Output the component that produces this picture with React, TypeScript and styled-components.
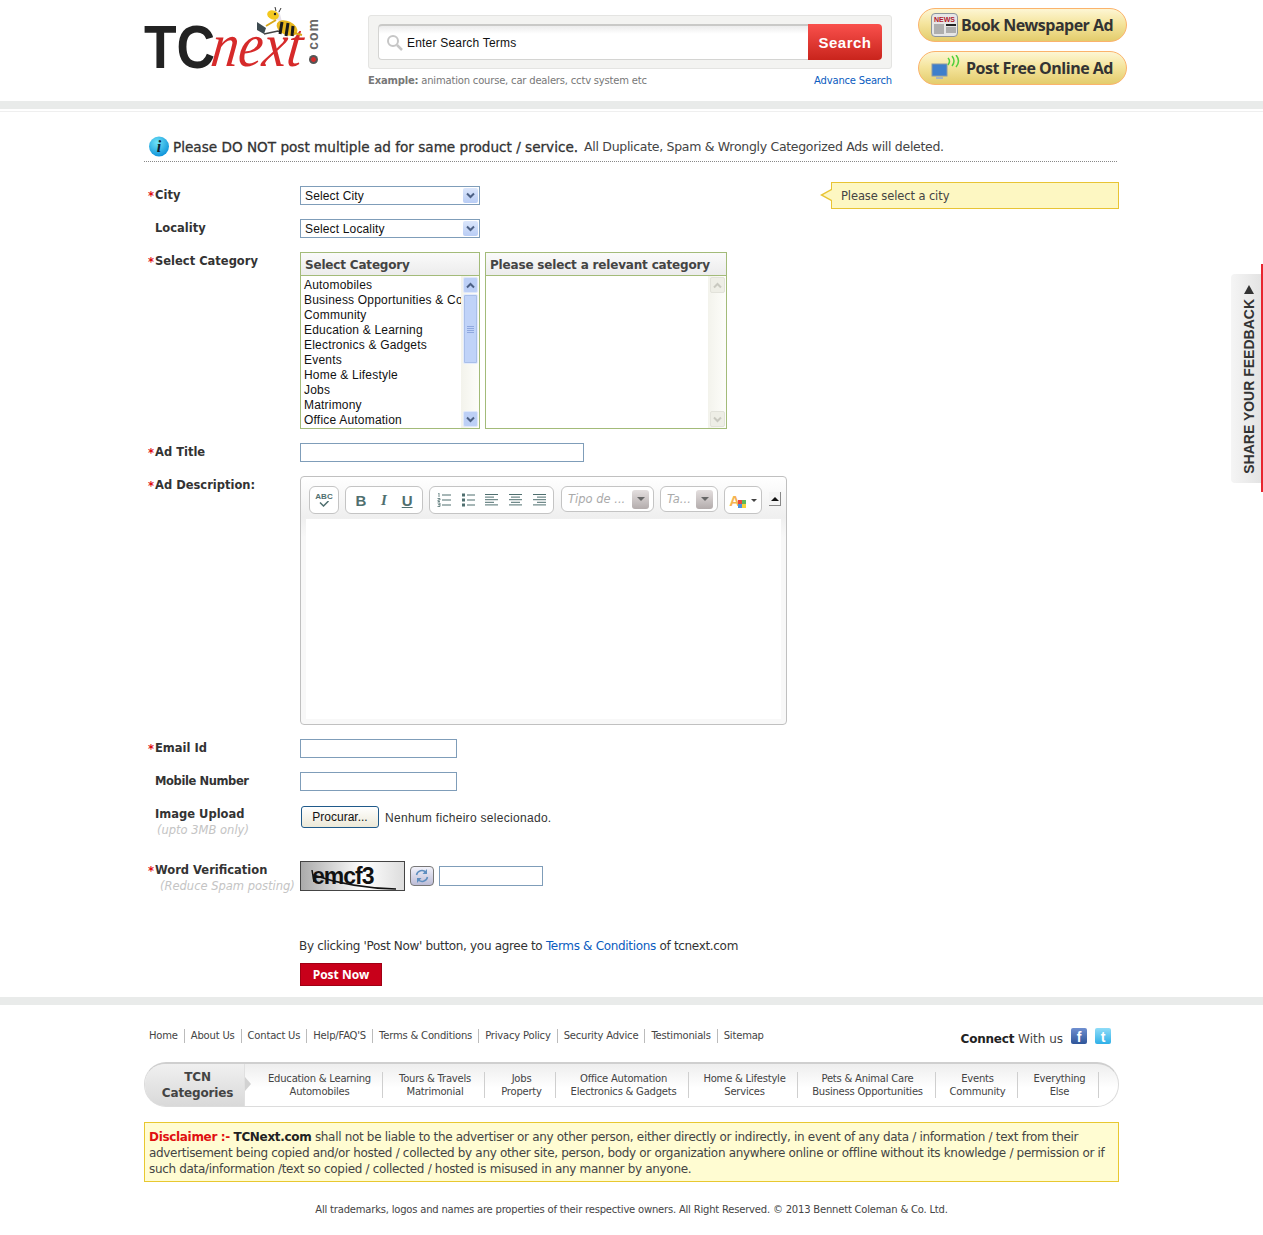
import React from "react";
import styled, { createGlobalStyle } from "styled-components";

const GlobalStyle = createGlobalStyle`
  html, body { margin: 0; padding: 0; background: #fff; }
  body { font-family: "DejaVu Sans", Verdana, sans-serif; font-size: 11px; color: #333; }
  * { box-sizing: border-box; }
`;

const categories = [
  "Automobiles",
  "Business Opportunities & Community",
  "Community",
  "Education & Learning",
  "Electronics & Gadgets",
  "Events",
  "Home & Lifestyle",
  "Jobs",
  "Matrimony",
  "Office Automation",
];

const footerLinks = [
  "Home",
  "About Us",
  "Contact Us",
  "Help/FAQ'S",
  "Terms & Conditions",
  "Privacy Policy",
  "Security Advice",
  "Testimonials",
  "Sitemap",
];

const footerCats = [
  { w: 138, pad: 12, a: "Education & Learning", b: "Automobiles" },
  { w: 102, pad: 3, a: "Tours & Travels", b: "Matrimonial" },
  { w: 71, pad: 3, a: "Jobs", b: "Property" },
  { w: 133, pad: 3, a: "Office Automation", b: "Electronics & Gadgets" },
  { w: 109, pad: 3, a: "Home & Lifestyle", b: "Services" },
  { w: 138, pad: 2, a: "Pets & Animal Care", b: "Business Opportunities" },
  { w: 82, pad: 2, a: "Events", b: "Community" },
  { w: 81, pad: 3, a: "Everything", b: "Else" },
];

const Chevron = ({ up, color = "#4d6185" }: { up?: boolean; color?: string }) => (
  <svg width="9" height="7" viewBox="0 0 9 7">
    <path d={up ? "M1 5.5 4.5 2 8 5.5" : "M1 1.5 4.5 5 8 1.5"} fill="none" stroke={color} strokeWidth="2" />
  </svg>
);

const Bee = () => (
  <svg width="50" height="36" viewBox="0 0 50 36">
    <path d="M1 15 10 21 8 27 1 23Z" fill="#3c4a50" />
    <path d="M8 27 22 24 38 28" fill="none" stroke="#444" strokeWidth="1.5" />
    <path d="M23 3 17 11 26 15Z" fill="#e4dfe8" />
    <ellipse cx="31" cy="21" rx="11" ry="7" fill="#e8b820" transform="rotate(25 31 21)" />
    <path d="M26 15 24 27M32 16 30 29M37 19 36 29" stroke="#1a1a1a" strokeWidth="3" />
    <ellipse cx="17" cy="8" rx="6" ry="4.5" fill="#f3c81e" transform="rotate(20 17 8)" />
    <path d="M20 4 19 0M23 5 25 1" stroke="#333" strokeWidth="1" />
    <circle cx="19" cy="7" r="1.2" fill="#222" />
    <path d="M20 13 10 19M38 26 46 28" stroke="#d9a81a" strokeWidth="2" />
  </svg>
);

const SearchGlass = () => (
  <svg width="18" height="18" viewBox="0 0 18 18">
    <circle cx="7" cy="7" r="5" fill="none" stroke="#c6c6c6" strokeWidth="2" />
    <path d="M11 11 16 16" stroke="#c6c6c6" strokeWidth="2.5" />
  </svg>
);

const NewsIcon = () => (
  <NewsBox>
    <NewsWord>NEWS</NewsWord>
    <svg width="22" height="10" viewBox="0 0 22 10">
      <path d="M0 1h10M0 3h10M0 5h10M0 7h10M0 9h10" stroke="#777" />
      <path d="M12 1h10" stroke="#222" strokeWidth="2" />
      <path d="M12 4h10M12 6h10M12 8h10" stroke="#777" />
    </svg>
  </NewsBox>
);

const MonitorIcon = () => (
  <svg width="32" height="27" viewBox="0 0 32 27">
    <rect x="1" y="9" width="15" height="12" fill="#3f7fcb" stroke="#8a9aa8" />
    <path d="M5 22h7v2H5Z" fill="#aab4bc" />
    <path d="M18 3q3 3 0 7M22 1q4 5 0 10M26 0q5 6 0 12" fill="none" stroke="#52cf3c" strokeWidth="1.5" transform="translate(-1 0)" />
  </svg>
);

const InfoIcon = () => (
  <svg width="20" height="21" viewBox="0 0 20 21">
    <defs>
      <radialGradient id="infoFill" cx="40%" cy="30%" r="75%">
        <stop offset="0" stopColor="#6fe3f7" />
        <stop offset="1" stopColor="#0a8fd8" />
      </radialGradient>
    </defs>
    <circle cx="10" cy="10.5" r="10" fill="url(#infoFill)" />
    <text x="10" y="16" textAnchor="middle" fontFamily="Liberation Serif" fontStyle="italic" fontWeight="700" fontSize="16" fill="#10202c">
      i
    </text>
  </svg>
);

const ScrollBar = ({ disabled }: { disabled?: boolean }) => {
  const color = disabled ? "#c9c9c0" : "#4d6185";
  return (
    <Scroll>
      <ScrollBtn $disabled={disabled}>
        <Chevron up color={color} />
      </ScrollBtn>
      {!disabled && (
        <Thumb>
          <svg width="7" height="7" viewBox="0 0 7 7">
            <path d="M0 .5h7M0 2.5h7M0 4.5h7M0 6.5h7" stroke="#8fa8df" />
          </svg>
        </Thumb>
      )}
      <ScrollBtn $disabled={disabled}>
        <Chevron color={color} />
      </ScrollBtn>
    </Scroll>
  );
};

const LinesIcon = ({ kind }: { kind: "left" | "center" | "right" }) => {
  const rows = [
    [13, 0],
    [9, kind === "left" ? 0 : kind === "center" ? 2 : 4],
    [13, 0],
    [9, kind === "left" ? 0 : kind === "center" ? 2 : 4],
    [13, 0],
  ];
  return (
    <svg width="13" height="12" viewBox="0 0 13 12">
      {rows.map(([w, x], i) => (
        <rect key={i} x={x} y={i * 2.6} width={w} height="1" fill="#4f6f6f" />
      ))}
    </svg>
  );
};

const NumberList = () => (
  <svg width="14" height="14" viewBox="0 0 14 14">
    <path d="M5 2h9M5 7h9M5 12h9" stroke="#4f6f6f" />
    <path d="M1 0h1v4M.5 5.500H3V7H1v1.500h2M.5 10H3v3.500H.5M1 11.700h2" fill="none" stroke="#4f6f6f" strokeWidth=".8" />
  </svg>
);

const BulletList = () => (
  <svg width="13" height="14" viewBox="0 0 13 14">
    <path d="M5 2h8M5 7h8M5 12h8" stroke="#4f6f6f" />
    <path d="M0 .5h3v3H0ZM0 5.500h3v3H0ZM0 10.500h3v3H0Z" fill="#4f6f6f" />
  </svg>
);

const Refresh = () => (
  <svg width="16" height="14" viewBox="0 0 16 14">
    <path d="M2.500 6A5.500 5.500 0 0 1 12 3.500M13.500 8A5.500 5.500 0 0 1 4 10.500" fill="none" stroke="#5f8fc0" strokeWidth="1.500" />
    <path d="M13 0v5H8.500ZM3 14V9h4.500Z" fill="#5f8fc0" />
  </svg>
);

const App = () => (
  <Page>
    <GlobalStyle />
    <Wrap>
      <Header>
        <Logo>
          <LogoTC>TC</LogoTC>
          <LogoNext>next</LogoNext>
          <LogoDot />
          <LogoCom>com</LogoCom>
          <BeeSpot>
            <Bee />
          </BeeSpot>
        </Logo>
        <SearchColumn>
          <SearchBox>
            <SearchField>
              <SearchGlass />
              <SearchText>Enter Search Terms</SearchText>
            </SearchField>
            <SearchButton>Search</SearchButton>
          </SearchBox>
          <SearchHints>
            <span>
              <b>Example:</b> animation course, car dealers, cctv system etc
            </span>
            <BlueLink>Advance Search</BlueLink>
          </SearchHints>
        </SearchColumn>
        <AdButtons>
          <AdButton>
            <NewsIcon />
            Book Newspaper Ad
          </AdButton>
          <AdButton>
            <MonitorIcon />
            Post Free Online Ad
          </AdButton>
        </AdButtons>
      </Header>
    </Wrap>
    <GreyBand />

    <Wrap>
      <Notice>
        <InfoIcon />
        <NoticeStrong>Please DO NOT post multiple ad for same product / service.</NoticeStrong>
        <NoticeSoft>All Duplicate, Spam &amp; Wrongly Categorized Ads will deleted.</NoticeSoft>
      </Notice>

      <Form>
        <Hint>Please select a city</Hint>
        <Row>
          <Label $required>City</Label>
          <SelectBox>
            Select City
            <SelectArrow>
              <Chevron />
            </SelectArrow>
          </SelectBox>
        </Row>
        <Row>
          <Label>Locality</Label>
          <SelectBox>
            Select Locality
            <SelectArrow>
              <Chevron />
            </SelectArrow>
          </SelectBox>
        </Row>
        <Row>
          <Label $required>Select Category</Label>
          <CategoryPanel $width={180}>
            <PanelTitle>Select Category</PanelTitle>
            <PanelBody>
              <CategoryList>
                {categories.map((c) => (
                  <div key={c}>{c}</div>
                ))}
              </CategoryList>
              <ScrollBar />
            </PanelBody>
          </CategoryPanel>
          <CategoryPanel $width={242}>
            <PanelTitle>Please select a relevant category</PanelTitle>
            <PanelBody>
              <CategoryList />
              <ScrollBar disabled />
            </PanelBody>
          </CategoryPanel>
        </Row>
        <Row>
          <Label $required>Ad Title</Label>
          <TextInput $width={284} />
        </Row>
        <Row>
          <Label $required>Ad Description:</Label>
          <Editor>
            <Toolbar>
              <ToolGroup $width={30}>
                <SpellIcon>
                  ABC
                  <svg width="12" height="6" viewBox="0 0 12 6">
                    <path d="M2 1.500 5.500 5 10.500 0" fill="none" stroke="#4f6f6f" strokeWidth="1.500" />
                  </svg>
                </SpellIcon>
              </ToolGroup>
              <ToolGroup $width={78}>
                <ToolBold>B</ToolBold>
                <ToolItalic>I</ToolItalic>
                <ToolUnder>U</ToolUnder>
              </ToolGroup>
              <ToolGroup $width={125}>
                <NumberList />
                <BulletList />
                <LinesIcon kind="left" />
                <LinesIcon kind="center" />
                <LinesIcon kind="right" />
              </ToolGroup>
              <ToolCombo $width={93} $lead>
                <ComboText>Tipo de ...</ComboText>
                <ComboArrow />
              </ToolCombo>
              <ToolCombo $width={58}>
                <ComboText>Ta...</ComboText>
                <ComboArrow />
              </ToolCombo>
              <ToolGroup $width={38}>
                <ColorIcon>
                  A
                  <ColorDots>
                    <i style={{ background: "#e8483c" }} />
                    <i style={{ background: "#5cb85c" }} />
                    <i style={{ background: "#4a90e2" }} />
                    <i style={{ background: "#f5d33c" }} />
                  </ColorDots>
                </ColorIcon>
                <SmallCaret />
              </ToolGroup>
              <Collapse>
                <UpTriangle />
              </Collapse>
            </Toolbar>
            <EditArea />
          </Editor>
        </Row>
        <Row>
          <Label $required>Email Id</Label>
          <TextInput $width={157} />
        </Row>
        <Row>
          <Label $tight>Mobile Number</Label>
          <TextInput $width={157} />
        </Row>
        <Row $minHeight={42}>
          <Label>
            Image Upload
            <SubLabel>(upto 3MB only)</SubLabel>
          </Label>
          <FileButton>Procurar...</FileButton>
          <FileText>Nenhum ficheiro selecionado.</FileText>
        </Row>
        <Row>
          <Label $required>
            Word Verification
            <SubLabel $indent={5}>(Reduce Spam posting)</SubLabel>
          </Label>
          <Captcha>
            <CaptchaWord>emcf3</CaptchaWord>
            <CaptchaLines width="105" height="30" viewBox="0 0 105 30">
              <path d="M11 8 13 20M12 13Q50 26 95 27" fill="none" stroke="#111" strokeWidth="1.500" />
            </CaptchaLines>
          </Captcha>
          <RefreshButton>
            <Refresh />
          </RefreshButton>
          <CaptchaInput />
        </Row>
      </Form>

      <Agree>
        By clicking 'Post Now' button, you agree to <BlueLink>Terms &amp; Conditions</BlueLink> of tcnext.com
      </Agree>
      <PostNow>Post Now</PostNow>
    </Wrap>

    <GreyBand $bottom />

    <Wrap>
      <FooterTop>
        <FooterLinks>
          {footerLinks.map((l) => (
            <FooterLink key={l}>{l}</FooterLink>
          ))}
        </FooterLinks>
        <Connect>
          <ConnectText>
            <b>Connect</b> With us
          </ConnectText>
          <Social $from="#6f8fd0" $to="#2f5599">f</Social>
          <Social $from="#8fdcf8" $to="#2fb0e8">t</Social>
        </Connect>
      </FooterTop>

      <Strip>
        <StripHead>
          TCN
          <br />
          Categories
        </StripHead>
        <StripGrid>
          {footerCats.map((c) => (
            <StripItem key={c.a} $width={c.w} $pad={c.pad}>
              {c.a}
              <br />
              {c.b}
            </StripItem>
          ))}
        </StripGrid>
      </Strip>

      <Disclaimer>
        <DisclaimerLead>Disclaimer :-</DisclaimerLead> <b>TCNext.com</b> shall not be liable to the advertiser or any other
        person, either directly or indirectly, in event of any data / information / text from their
        <br />
        advertisement being copied and/or hosted / collected by any other site, person, body or organization anywhere
        online or offline without its knowledge / permission or if
        <br />
        such data/information /text so copied / collected / hosted is misused in any manner by anyone.
      </Disclaimer>

      <Copyright>
        All trademarks, logos and names are properties of their respective owners. All Right Reserved. <CopyMark>©</CopyMark>{" "}
        2013 Bennett Coleman &amp; Co. Ltd.
      </Copyright>
    </Wrap>

    <FeedbackTab>
      <FeedbackText>SHARE YOUR FEEDBACK</FeedbackText>
      <FeedbackArrow />
    </FeedbackTab>
  </Page>
);

export default App;

const Page = styled.div`
  position: relative;
  width: 1263px;
  height: 1235px;
  overflow: hidden;
`;

const Wrap = styled.div`
  width: 975px;
  margin-left: 144px;
`;

const Header = styled.div`
  display: flex;
  height: 101px;
`;

const Logo = styled.div`
  position: relative;
  width: 224px;
  height: 101px;
  flex: none;
`;

const LogoTC = styled.span`
  position: absolute;
  left: 0;
  top: 12px;
  font: 700 62px/70px "Liberation Sans", sans-serif;
  color: #222;
  transform: scaleX(0.86);
  transform-origin: left top;
`;

const LogoNext = styled.span`
  position: absolute;
  left: 72px;
  top: 14px;
  font: italic 400 62px/62px "Liberation Serif", serif;
  color: #d62a2a;
  transform: scaleX(0.88) skewX(-8deg);
  transform-origin: left top;
`;

const LogoDot = styled.span`
  position: absolute;
  left: 165px;
  top: 55px;
  width: 9px;
  height: 9px;
  border-radius: 50%;
  background: radial-gradient(circle, #d62a2a 30%, #555 45%);
`;

const LogoCom = styled.span`
  position: absolute;
  left: 162px;
  top: 18px;
  writing-mode: vertical-rl;
  transform: rotate(180deg);
  font: 700 14px/14px "Liberation Sans", sans-serif;
  letter-spacing: 1px;
  color: #666;
`;

const BeeSpot = styled.span`
  position: absolute;
  left: 112px;
  top: 7px;
`;

const SearchColumn = styled.div`
  width: 524px;
  flex: none;
  margin-right: 26px;
  padding-top: 15px;
`;

const SearchBox = styled.div`
  display: flex;
  height: 54px;
  padding: 8px 9px;
  background: #f3f3f1;
  border: 1px solid #e4e4e2;
  border-radius: 3px;
`;

const SearchField = styled.div`
  flex: 1;
  display: flex;
  align-items: center;
  gap: 3px;
  padding-left: 7px;
  background: linear-gradient(#ececec, #fff 8px);
  border: 1px solid #d4d4d2;
  border-top: 2px solid #c9c9c7;
  border-right: 0;
  border-radius: 4px 0 0 4px;
`;

const SearchText = styled.span`
  font: 12px "Liberation Sans", sans-serif;
  letter-spacing: 0.2px;
  color: #111;
`;

const SearchButton = styled.div`
  width: 74px;
  display: flex;
  align-items: center;
  justify-content: center;
  background: linear-gradient(#f9504c, #c9241c);
  border-radius: 0 4px 4px 0;
  font: 700 15px "Liberation Sans", sans-serif;
  letter-spacing: 0.5px;
  color: #fff;
`;

const SearchHints = styled.div`
  display: flex;
  justify-content: space-between;
  margin-top: 5px;
  font-size: 10px;
  line-height: 13px;
  letter-spacing: -0.19px;
  color: #777;
`;

const BlueLink = styled.span`
  color: #0a5cc0;
`;

const AdButtons = styled.div`
  width: 209px;
  flex: none;
  padding-top: 8px;
  display: flex;
  flex-direction: column;
  gap: 9px;
`;

const AdButton = styled.div`
  height: 34px;
  display: flex;
  align-items: center;
  gap: 3px;
  padding-left: 12px;
  border: 1px solid #fbb36c;
  border-radius: 17px;
  background: linear-gradient(#fdf6d4, #f5e59e 45%, #e3cc6c);
  font: 700 16px "Open Sans", sans-serif;
  letter-spacing: -0.5px;
  color: #333;
  white-space: nowrap;
`;

const NewsBox = styled.span`
  width: 27px;
  height: 24px;
  padding: 2px;
  border-radius: 4px;
  display: flex;
  flex-direction: column;
  border: 1px solid #8c959c;
  background: #e6e6e6;
`;

const NewsWord = styled.span`
  font: 700 7px/8px "Liberation Sans", sans-serif;
  letter-spacing: 0;
  color: #b0182a;
`;

const GreyBand = styled.div<{ $bottom?: boolean }>`
  height: 8px;
  background: #e9ebea;
  margin-top: ${(p) => (p.$bottom ? "11px" : "0")};
  box-shadow: ${(p) => (p.$bottom ? "none" : "0 2px 0 #fff, 0 3px 0 #efefef")};
`;

const Notice = styled.div`
  display: flex;
  align-items: center;
  width: 973px;
  height: 53px;
  padding: 25px 0 2px 5px;
  border-bottom: 1px dotted #888;
  gap: 4px;
`;

const NoticeStrong = styled.span`
  font-size: 13.600px;
  color: #333;
  -webkit-text-stroke: 0.3px #333;
  white-space: nowrap;
`;

const NoticeSoft = styled.span`
  margin-left: 2px;
  font-size: 12.500px;
  letter-spacing: -0.3px;
  color: #444;
  white-space: nowrap;
`;

const Form = styled.div`
  position: relative;
  display: flex;
  flex-direction: column;
  gap: 14px;
  margin-top: 24px;
`;

const Hint = styled.div`
  position: absolute;
  left: 687px;
  top: -4px;
  width: 288px;
  height: 27px;
  padding-left: 9px;
  line-height: 27px;
  font-size: 11.500px;
  letter-spacing: -0.1px;
  color: #444;
  background: #fdf7c2;
  border: 1px solid #e8c434;

  &::before {
    content: "";
    position: absolute;
    left: -12px;
    top: 6px;
    border: 6px solid transparent;
    border-left-width: 0;
    border-right: 11px solid #e8c434;
  }

  &::after {
    content: "";
    position: absolute;
    left: -9px;
    top: 7px;
    border: 5px solid transparent;
    border-left-width: 0;
    border-right: 9px solid #fdf7c2;
  }
`;

const Row = styled.div<{ $minHeight?: number }>`
  display: flex;
  align-items: flex-start;
  min-height: ${(p) => p.$minHeight ?? 0}px;
`;

const Label = styled.div<{ $required?: boolean; $tight?: boolean }>`
  width: 156px;
  flex: none;
  padding: 1px 0 0 11px;
  position: relative;
  font-weight: 700;
  font-size: 11.500px;
  line-height: 17px;
  letter-spacing: ${(p) => (p.$tight ? "-0.4px" : "0")};
  color: #333;

  &::before {
    content: ${(p) => (p.$required ? '"*"' : '""')};
    position: absolute;
    left: 4px;
    top: 2px;
    color: #e01010;
  }
`;

const SubLabel = styled.div<{ $indent?: number }>`
  padding-left: ${(p) => (p.$indent ?? 2)}px;
  font-style: italic;
  font-weight: 400;
  font-size: 11.500px;
  line-height: 15px;
  color: #c4c4c4;
  white-space: nowrap;
`;

const SelectBox = styled.div`
  width: 180px;
  height: 19px;
  display: flex;
  align-items: center;
  justify-content: space-between;
  padding: 0 1px 0 4px;
  border: 1px solid #7f9db9;
  font: 12px "Liberation Sans", sans-serif;
  letter-spacing: 0.15px;
  color: #111;
`;

const SelectArrow = styled.span`
  width: 15px;
  height: 15px;
  display: flex;
  align-items: center;
  justify-content: center;
  background: linear-gradient(#dbe6fb, #b9cdf5);
  border-radius: 2px;
`;

const CategoryPanel = styled.div<{ $width: number }>`
  width: ${(p) => p.$width}px;
  height: 177px;
  border: 1px solid #a3bb79;
  margin-right: 5px;
  display: flex;
  flex-direction: column;
`;

const PanelTitle = styled.div`
  height: 23px;
  padding-left: 4px;
  font-weight: 700;
  font-size: 12px;
  line-height: 24px;
  letter-spacing: -0.18px;
  color: #444;
  background: linear-gradient(#fafafa, #ececec);
  border-bottom: 1px solid #a3bb79;
  white-space: nowrap;
`;

const PanelBody = styled.div`
  flex: 1;
  display: flex;
  min-height: 0;
`;

const CategoryList = styled.div`
  flex: 1;
  min-width: 0;
  overflow: hidden;
  padding: 2px 0 0 3px;
  font: 12px/15px "Liberation Sans", sans-serif;
  letter-spacing: 0.2px;
  color: #111;
  white-space: nowrap;
`;

const Scroll = styled.div`
  width: 18px;
  flex: none;
  padding: 1px 1px 1px 2px;
  display: flex;
  flex-direction: column;
  justify-content: space-between;
  background: linear-gradient(90deg, #f3f3ec, #fdfdfa);
`;

const ScrollBtn = styled.div<{ $disabled?: boolean }>`
  height: 16px;
  display: flex;
  align-items: center;
  justify-content: center;
  border-radius: 2px;
  border: 1px solid ${(p) => (p.$disabled ? "#e2e2da" : "#dfe8fb")};
  background: ${(p) => (p.$disabled ? "#eeeee6" : "#bdd0f6")};
`;

const Thumb = styled.div`
  height: 70px;
  margin-top: 1px;
  margin-bottom: auto;
  display: flex;
  align-items: center;
  justify-content: center;
  border-radius: 2px;
  border: 1px solid #e4ecfc;
  outline: 1px solid #a9bfe9;
  outline-offset: -2px;
  background: #c0d3f8;
`;

const TextInput = styled.input<{ $width: number }>`
  width: ${(p) => p.$width}px;
  height: 19px;
  padding: 0 3px;
  border: 1px solid #7f9db9;
  background: #fff;
  outline: none;
`;

const Editor = styled.div`
  width: 487px;
  height: 249px;
  padding: 0 5px 5px;
  border: 1px solid #c0c0c0;
  border-radius: 4px;
  background: linear-gradient(#fff, #efefef 40px, #f8f8f8 60px);
  display: flex;
  flex-direction: column;
`;

const Toolbar = styled.div`
  height: 42px;
  flex: none;
  padding: 9px 0 0 3px;
  display: flex;
  align-items: flex-start;
  gap: 6px;
`;

const ToolGroup = styled.div<{ $width: number }>`
  width: ${(p) => p.$width}px;
  height: 28px;
  flex: none;
  display: flex;
  align-items: center;
  justify-content: space-around;
  padding: 0 2px;
  background: #fff;
  border: 1px solid #c4c4c4;
  border-radius: 6px;
`;

const SpellIcon = styled.span`
  display: flex;
  flex-direction: column;
  align-items: center;
  font: 700 8px/8px "Liberation Sans", sans-serif;
  color: #4f6f6f;
`;

const ToolBold = styled.span`
  font: 700 15px "Liberation Sans", sans-serif;
  color: #4f6f6f;
`;

const ToolItalic = styled(ToolBold)`
  font-style: italic;
  font-family: "Liberation Serif", serif;
`;

const ToolUnder = styled(ToolBold)`
  text-decoration: underline;
`;

const ToolCombo = styled.div<{ $width: number; $lead?: boolean }>`
  width: ${(p) => p.$width}px;
  height: 26px;
  flex: none;
  margin-left: ${(p) => (p.$lead ? "1px" : "0")};
  display: flex;
  align-items: center;
  justify-content: space-between;
  padding: 0 4px 0 6px;
  background: #fff;
  border: 1px solid #c4c4c4;
  border-radius: 6px;
`;

const ComboText = styled.span`
  font-style: italic;
  font-size: 11.500px;
  color: #aaa;
  white-space: nowrap;
`;

const ComboArrow = styled.span`
  width: 17px;
  height: 19px;
  display: flex;
  align-items: center;
  justify-content: center;
  border-radius: 3px;
  background: linear-gradient(#e4dfdf, #b3acac);

  &::after {
    content: "";
    border: 4px solid transparent;
    border-top: 4px solid #666;
    border-bottom: 0;
  }
`;

const ColorIcon = styled.span`
  position: relative;
  font: 700 15px/15px "Liberation Sans", sans-serif;
  color: #f5b452;
  padding-right: 6px;
`;

const ColorDots = styled.span`
  position: absolute;
  right: 0;
  bottom: 0;
  width: 8px;
  display: grid;
  grid-template-columns: 4px 4px;

  i {
    display: block;
    height: 4px;
  }
`;

const SmallCaret = styled.span`
  border: 3px solid transparent;
  border-top: 3px solid #444;
  border-bottom: 0;
`;

const Collapse = styled.div`
  width: 13px;
  height: 14px;
  margin: 6px 0 0 1px;
  display: flex;
  align-items: center;
  justify-content: center;
  border-right: 1px solid #888;
  border-bottom: 1px solid #888;
  background: #f4f4f4;
`;

const UpTriangle = styled.span`
  border: 4px solid transparent;
  border-bottom: 4px solid #111;
  border-top: 0;
`;

const EditArea = styled.div`
  flex: 1;
  background: #fff;
`;

const FileButton = styled.button`
  width: 78px;
  height: 22px;
  margin: 1px 0 0 1px;
  padding: 0;
  border: 1px solid #1f5a8a;
  border-radius: 3px;
  background: linear-gradient(#fff, #ece9d8);
  font: 12px "Liberation Sans", sans-serif;
  color: #111;
`;

const FileText = styled.span`
  margin: 2px 0 0 6px;
  font: 12px/22px "Liberation Sans", sans-serif;
  letter-spacing: 0.3px;
  color: #333;
`;

const Captcha = styled.div`
  position: relative;
  width: 105px;
  height: 30px;
  flex: none;
  border: 1px solid #444;
  background: linear-gradient(90deg, #aaa, #fff 60%, #ddd);
  overflow: hidden;
  display: flex;
  align-items: center;
  padding-left: 11px;
`;

const CaptchaWord = styled.span`
  font: 700 23px/28px "Liberation Sans", sans-serif;
  letter-spacing: -1px;
  color: #111;
`;

const CaptchaLines = styled.svg`
  position: absolute;
  left: 0;
  top: 0;
`;

const RefreshButton = styled.div`
  width: 24px;
  height: 20px;
  margin: 5px 0 0 5px;
  display: flex;
  align-items: center;
  justify-content: center;
  border: 1px solid #777;
  border-radius: 4px;
  background: linear-gradient(#f2f2fa, #bcbcd6);
`;

const CaptchaInput = styled(TextInput).attrs({ $width: 104 })`
  height: 20px;
  margin: 5px 0 0 5px;
`;

const Agree = styled.div`
  margin: 44px 0 0 155px;
  font-size: 12px;
  line-height: 16px;
  letter-spacing: -0.32px;
  color: #333;
  white-space: nowrap;
`;

const PostNow = styled.div`
  width: 82px;
  height: 23px;
  margin: 9px 0 0 156px;
  background: #c8001a;
  border: 1px solid #a00014;
  color: #fff;
  font: 700 12px/21px "Open Sans", sans-serif;
  text-align: center;
`;

const FooterTop = styled.div`
  display: flex;
  justify-content: space-between;
  height: 57px;
  padding: 24px 8px 0 5px;
`;

const FooterLinks = styled.div`
  display: flex;
  height: 14px;
`;

const FooterLink = styled.span`
  padding: 0 6px;
  border-left: 1px solid #bbb;
  font-size: 10px;
  line-height: 14px;
  letter-spacing: -0.19px;
  color: #444;
  white-space: nowrap;

  &:first-child {
    padding-left: 0;
    border-left: 0;
  }
`;

const Connect = styled.div`
  display: flex;
  align-items: center;
  height: 18px;
  margin-top: -2px;
  font-size: 12px;
  color: #444;
  white-space: pre;
`;

const ConnectText = styled.span`
  padding-top: 6px;

  b {
    color: #222;
    letter-spacing: -0.2px;
  }
`;

const Social = styled.span<{ $from: string; $to: string }>`
  width: 16px;
  height: 16px;
  margin-left: 8px;
  border-radius: 2px;
  background: linear-gradient(${(p) => p.$from}, ${(p) => p.$to});
  color: #fff;
  font: 700 14px/18px "Liberation Sans", sans-serif;
  text-align: center;
`;

const Strip = styled.div`
  display: flex;
  height: 45px;
  border: 1px solid #dcdcdc;
  border-top: 2px solid #cfcfcf;
  border-radius: 22px;
  background: linear-gradient(#eeeeee, #fff 24px);
`;

const StripHead = styled.div`
  position: relative;
  width: 100px;
  flex: none;
  text-align: center;
  padding-left: 6px;
  font-weight: 700;
  font-size: 12px;
  line-height: 16px;
  padding-top: 5px;
  letter-spacing: -0.15px;
  color: #444;
  background: linear-gradient(#f0f0f0, #d9d9d9);
  border-radius: 20px 0 0 20px;
  border-right: 1px solid #e0e0e0;

  &::after {
    content: "";
    position: absolute;
    right: -7px;
    top: 13px;
    border: 7px solid transparent;
    border-right: 0;
    border-left: 6px solid #d2d2d2;
  }
`;

const StripGrid = styled.div`
  display: flex;
  align-items: center;
`;

const StripItem = styled.div<{ $width: number; $pad: number }>`
  width: ${(p) => p.$width}px;
  height: 26px;
  padding-left: ${(p) => p.$pad}px;
  border-right: 1px solid #cfcfcf;
  text-align: center;
  font-size: 10px;
  line-height: 13px;
  letter-spacing: -0.22px;
  color: #444;
  white-space: nowrap;
`;

const Disclaimer = styled.div`
  height: 60px;
  margin-top: 15px;
  padding: 6px 4px 0;
  background: #fffcd2;
  border: 1px solid #e8c830;
  font-size: 12px;
  line-height: 16px;
  letter-spacing: -0.32px;
  color: #444;
  white-space: nowrap;

  b {
    color: #222;
  }
`;

const DisclaimerLead = styled.b`
  && {
    color: #e01010;
  }
`;

const Copyright = styled.div`
  margin-top: 21px;
  text-align: center;
  font-size: 10px;
  line-height: 14px;
  letter-spacing: -0.2px;
  color: #444;
  white-space: nowrap;
`;

const CopyMark = styled.span`
  font-size: 10px;
`;

const FeedbackTab = styled.div`
  position: absolute;
  top: 274px;
  right: 0;
  width: 32px;
  height: 209px;
  display: flex;
  flex-direction: column-reverse;
  align-items: center;
  justify-content: flex-end;
  padding: 11px 0 11px 4px;
  gap: 5px;
  background: linear-gradient(90deg, #f5f5f5, #e2e2e2);
  border-radius: 4px 0 0 4px;

  &::after {
    content: "";
    position: absolute;
    right: 0;
    top: -10px;
    width: 2px;
    height: 228px;
    background: #e8252f;
  }
`;

const FeedbackText = styled.span`
  writing-mode: vertical-rl;
  transform: rotate(180deg);
  font: 700 14px/14px "Liberation Sans", sans-serif;
  color: #333;
  white-space: nowrap;
`;

const FeedbackArrow = styled.span`
  border: 5px solid transparent;
  border-bottom: 9px solid #333;
  border-top: 0;
`;
